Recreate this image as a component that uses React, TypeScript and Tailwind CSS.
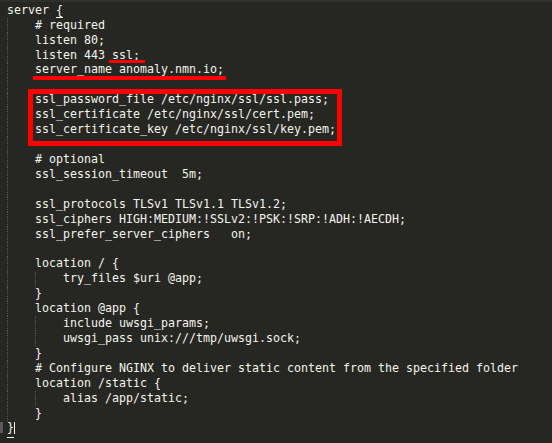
const code = [
  'server {',
  '    # required',
  '    listen 80;',
  '    listen 443 ssl;',
  '    server_name anomaly.nmn.io;',
  '',
  '    ssl_password_file /etc/nginx/ssl/ssl.pass;',
  '    ssl_certificate /etc/nginx/ssl/cert.pem;',
  '    ssl_certificate_key /etc/nginx/ssl/key.pem;',
  '',
  '    # optional',
  '    ssl_session_timeout  5m;',
  '',
  '    ssl_protocols TLSv1 TLSv1.1 TLSv1.2;',
  '    ssl_ciphers HIGH:MEDIUM:!SSLv2:!PSK:!SRP:!ADH:!AECDH;',
  '    ssl_prefer_server_ciphers   on;',
  '',
  '    location / {',
  '        try_files $uri @app;',
  '    }',
  '    location @app {',
  '        include uwsgi_params;',
  '        uwsgi_pass unix:///tmp/uwsgi.sock;',
  '    }',
  '    # Configure NGINX to deliver static content from the specified folder',
  '    location /static {',
  '        alias /app/static;',
  '    }',
  '}',
];

function Guide() {
  return <span className="h-full w-[28px] shrink-0 border-l border-dotted border-[#5a5a53]" />;
}

function Line({ text, index }: { text: string; index: number }) {
  const last = index === code.length - 1;
  const first = index === 0;
  const spaces = text.length - text.trimStart().length;
  let level = Math.floor(spaces / 4);
  if (text === '') level = 1;
  const body = text.slice(level * 4);

  return (
    <div className="relative flex h-[14.93px] items-center pl-[7px] whitespace-pre">
      {last && <span className="absolute left-0 top-[1px] h-[11px] w-[3px] bg-[#5c5c57]" />}
      {Array.from({ length: level }).map((_, i) => (
        <Guide key={i} />
      ))}
      {first ? (
        <span>
          server <span className="border-b border-[#f8f8f2]">{'{'}</span>
        </span>
      ) : last ? (
        <span className="flex items-center">
          <span className="border-b border-[#f8f8f2]">{'}'}</span>
          <span className="ml-[0px] h-[12px] w-px bg-[#f8f8f2]" />
        </span>
      ) : (
        <span>{body}</span>
      )}
    </div>
  );
}

export default function App() {
  return (
    <div className="h-[443px] w-[552px] overflow-hidden bg-[#262722] font-['DejaVu_Sans_Mono',monospace] text-[11.63px] text-[#f4f4ee]">
      <div className="flex h-[2px]">
        <div className="w-[63px] bg-[#2e2f2a]" />
        <div className="flex-1 bg-[#48484360]" />
      </div>
      <div className="relative pt-[1px]">
        {code.map((text, i) => (
          <Line key={i} text={text} index={i} />
        ))}
        {/* hand-drawn annotations */}
        <div className="absolute left-[109px] top-[58px] h-[3px] w-[36px] bg-[#ff0000]" />
        <div className="absolute left-[33px] top-[74px] h-[4px] w-[193px] bg-[#ff0000]" />
        <div className="absolute left-[28px] top-[87px] h-[57px] w-[314px] border-[5px] border-[#ff0000]" />
      </div>
    </div>
  );
}
